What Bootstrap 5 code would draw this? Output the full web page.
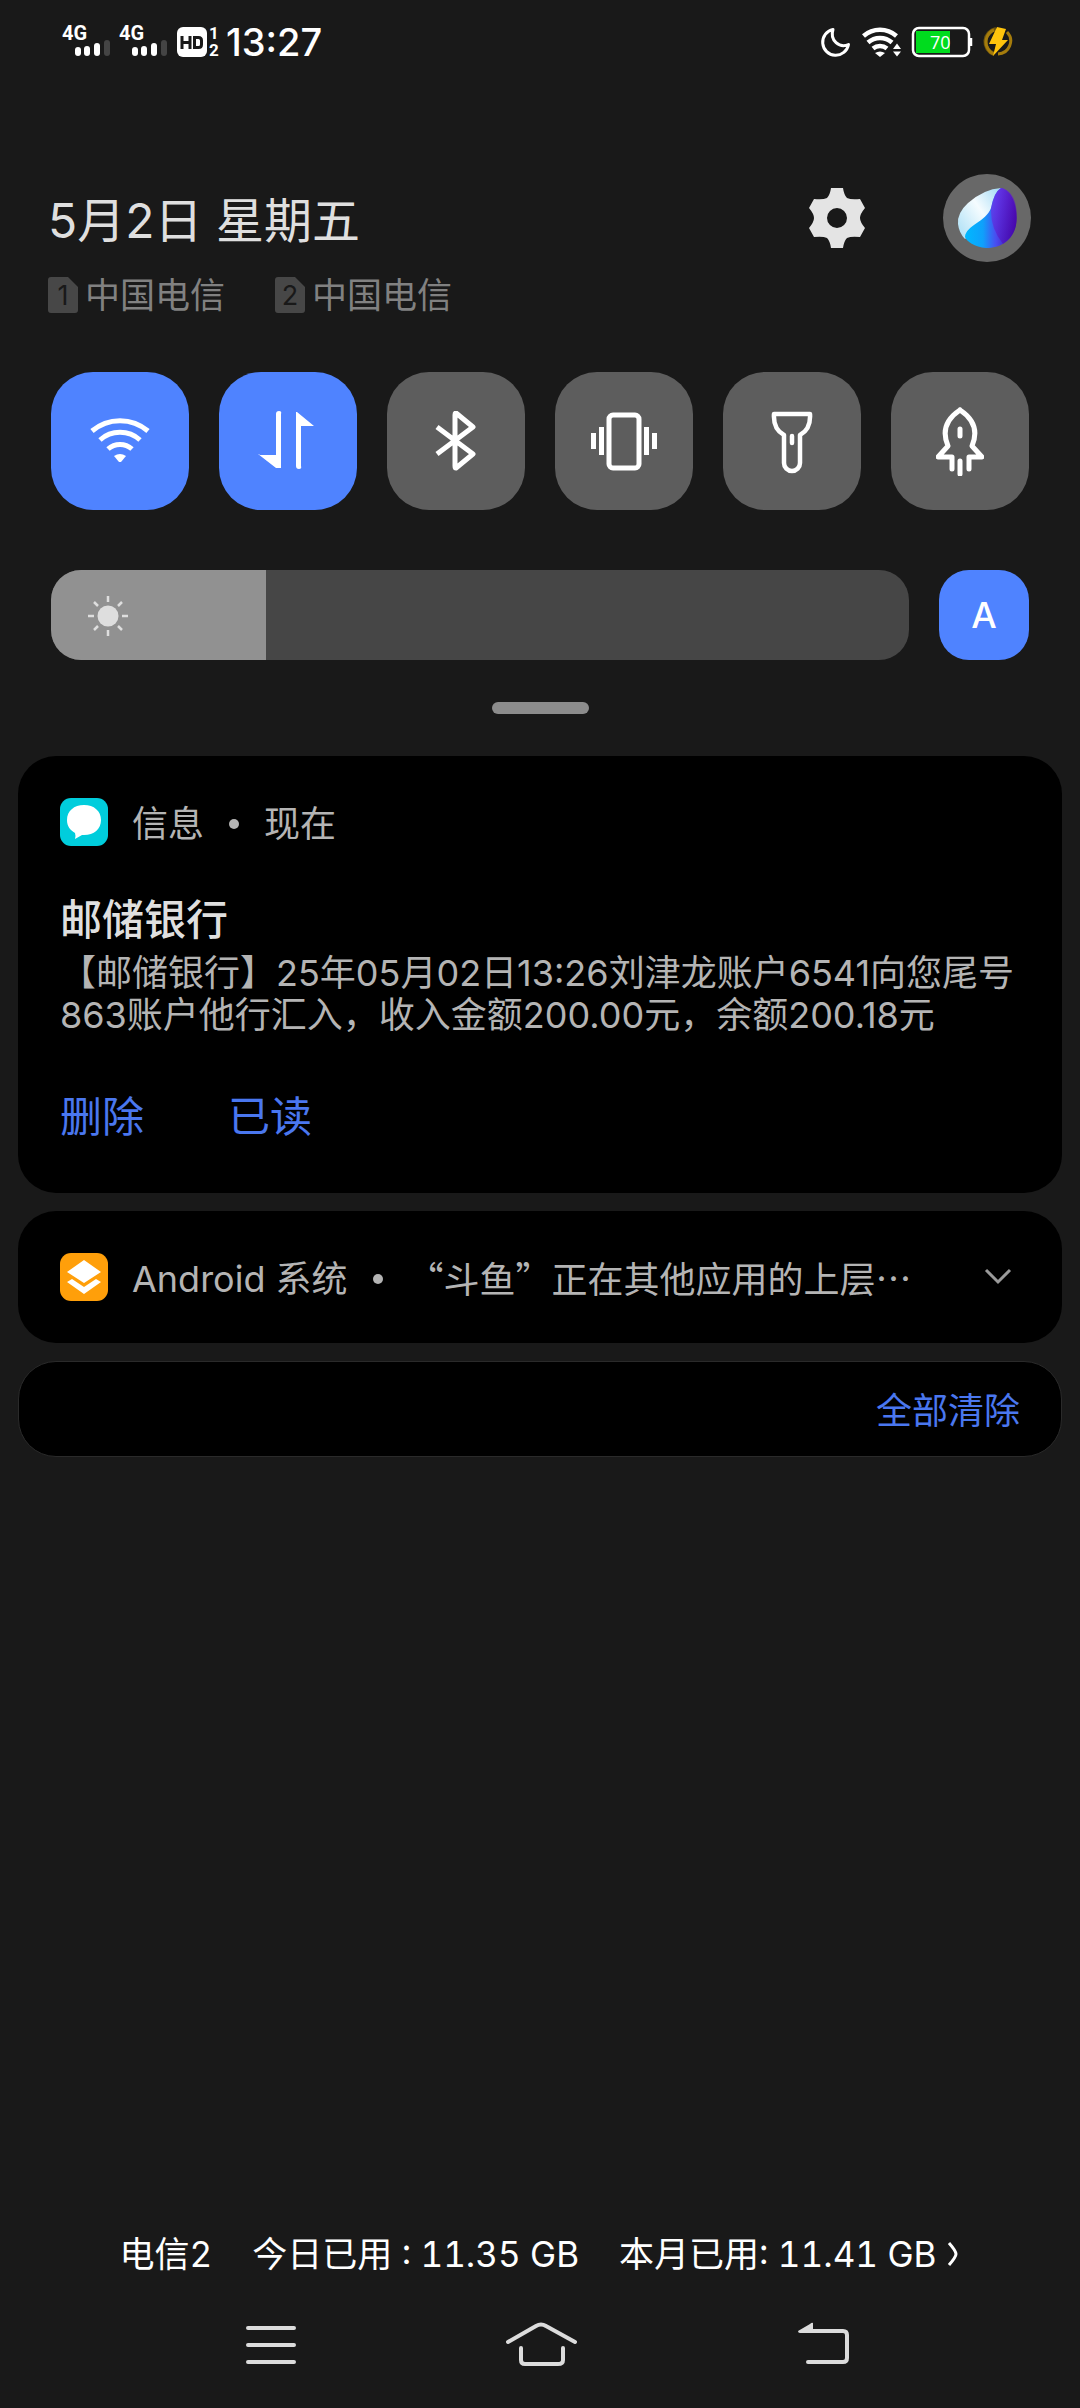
<!DOCTYPE html>
<html lang="zh-CN">
<head>
<meta charset="utf-8">
<meta name="viewport" content="width=device-width, initial-scale=1">
<title>通知中心</title>
<link href="https://cdn.jsdelivr.net/npm/bootstrap@5.3.0/dist/css/bootstrap.min.css" rel="stylesheet">
<style>
body{background:#191919;color:#dfdfdf;font-family:Inter,"Noto Sans CJK SC",sans-serif;font-size:36px;line-height:42px}
svg{display:block;flex:none}
button{border:0;background:none;color:inherit;padding:0;font:inherit}
.shade{min-height:100vh}
.statusbar{height:84px;padding:0 66px 0 60px;color:#fff}
.clock{font-size:38px;font-weight:500}
.datehead{padding:90px 49px 0 48px}
.headtext{padding-top:18px}
.headbtns{gap:78px}
.today{font-size:48px;line-height:58px}
.carriers{color:#818181;gap:50px;font-size:35px}
.sim{gap:7px}
.avatar{width:88px;height:88px;background:#686868}
.tiles{padding:56px 51px 0;gap:30px}
.tile{flex:1;height:138px;border-radius:42px;background:#5d5d5d;color:#fff}
.on{background:#4f83ff;color:#fff}
.bright{padding:60px 51px 0;gap:30px}
.slide{height:90px;border-radius:30px;overflow:hidden}
.slide input{-webkit-appearance:none;appearance:none;width:100%;height:90px;margin:0;display:block;background:#464646}
.slide input::-webkit-slider-thumb{-webkit-appearance:none;width:1px;height:90px;background:#919191;box-shadow:-500px 0 0 499px #919191}
.sun{left:36px;top:25px;pointer-events:none}
.auto{width:90px;height:90px;border-radius:30px;font-weight:500}
.grip{width:97px;height:12px;margin:42px auto;background:#8c8c8c}
.notices{padding:0 18px;gap:18px}
.note{background:#000;border-radius:38px;padding:42px;color:#b4b4b4}
.appline{height:48px}
.appname{padding-top:3px}
.appicon{margin-right:24px}
.bullet{width:10px;height:10px;background:#b4b4b4;margin:3px 25px 0}
.quoted{font-family:"Noto Sans CJK SC",sans-serif}
.sender{font-size:42px;line-height:50px;font-weight:500;color:#dfdfdf;margin:49px 0 7px}
.acts{gap:84px;font-size:42px;line-height:50px;margin:56px 0 9px;color:#4a77ef}
.clearall{border:1px solid #2a2a2a;padding:28px 41px 24px;color:#4a77ef}
.usage{color:#fff;gap:40px;font-size:35px;text-decoration:none;margin-bottom:42px;font-variant-numeric:tabular-nums}
.usage:hover{color:#fff}
.navkeys{color:#dcdcdc;padding:0 228px 35px 234px}
</style>
<script src="https://cdn.jsdelivr.net/npm/bootstrap@5.3.0/dist/js/bootstrap.bundle.min.js"></script>
</head>
<body>
<div class="shade d-flex flex-column">
<header class="statusbar d-flex align-items-center justify-content-between">
  <div class="d-flex align-items-center">
    <svg width="162" height="52" viewBox="60 16 162 52" fill="#fff" font-family="Roboto, sans-serif" font-weight="700">
      <text x="62" y="40" font-size="20">4G</text><text x="119" y="40" font-size="20">4G</text>
      <g id="bars"><rect x="75" y="47" width="6" height="9" rx="3"/><rect x="84" y="46" width="6" height="10" rx="3"/><rect x="94" y="43" width="6" height="13" rx="3"/><rect x="104" y="40" width="6" height="16" rx="3" fill="#444"/></g>
      <use href="#bars" x="57"/>
      <rect x="177" y="27" width="30" height="30" rx="6"/>
      <path d="M182 36v13M190 36v13M182 42.500h8M194.500 37.500h4q3 0 3 3v4q0 3-3 3h-4z" fill="none" stroke="#191919" stroke-width="3"/>
      <text x="209" y="39" font-size="17">1</text><text x="209" y="56" font-size="17">2</text>
    </svg>
    <span class="clock ms-1">13:27</span>
  </div>
  <svg width="194" height="34" viewBox="820 25 194 34" fill="none" stroke="#fff">
    <path d="M833 29.500a13 13 0 1 0 15.500 15c-9 4-19-4-15.500-15z" stroke-width="3" stroke-linejoin="round"/>
    <path d="M863.500 36a25 25 0 0 1 33 0M868 42.500a18 18 0 0 1 24 0M873 48.500a11 11 0 0 1 14 0" stroke-width="4.500"/>
    <path d="M875 53q5-3 10 0l-5 4zM893 49h8l-4-5.500zM893 51.500h8l-4 5z" fill="#fff" stroke="none"/>
    <rect x="913" y="28" width="56" height="28" rx="6" stroke-width="2.500"/><path d="M916 31h34v22h-34z" fill="#00dc1e" stroke="none"/><path d="M971 38v8" stroke-width="2.500"/>
    <text x="930" y="49" font-size="18" fill="#fff" stroke="none" font-family="Open Sans, sans-serif">70</text>
    <path d="M994 54a13 13 0 0 1 2-25" stroke="#6b5410" stroke-width="4"/><path d="M994 30a13 13 0 0 0-7 17q3 6 7 7M1007 32a13 13 0 0 1-9 22" stroke="#a57c0c" stroke-width="3"/>
    <path d="M997 27l9 2-4 11h6l-15 16 3-12h-7z" fill="#ffc40c" stroke="none"/>
  </svg>
</header>

<section class="datehead d-flex justify-content-between align-items-start">
  <div class="headtext">
    <div class="today">5月2日 星期五</div>
    <div class="carriers d-flex mt-4">
      <span class="sim d-flex align-items-center"><svg width="30" height="36" viewBox="0 0 30 36"><path d="M3 0h17l10 10v23q0 3-3 3H3q-3 0-3-3V3q0-3 3-3z" fill="#474747"/><text x="15" y="28" font-size="27" text-anchor="middle" fill="#191919">1</text></svg>中国电信</span>
      <span class="sim d-flex align-items-center"><svg width="30" height="36" viewBox="0 0 30 36"><path d="M3 0h17l10 10v23q0 3-3 3H3q-3 0-3-3V3q0-3 3-3z" fill="#474747"/><text x="15" y="28" font-size="27" text-anchor="middle" fill="#191919">2</text></svg>中国电信</span>
    </div>
  </div>
  <div class="headbtns d-flex align-items-center">
    <button type="button" aria-label="设置"><svg width="56" height="60" viewBox="0 0 56 60"><path fill-rule="evenodd" fill="#e4e4e4" d="M22 0h12q1 7 4 10q4 2 13 1l5 9q-5 6-5 10t5 10l-5 9q-9-1-13 1q-3 3-4 10H22q-1-7-4-10q-4-2-13-1l-5-9q5-6 5-10t-5-10l5-9q9 1 13-1q3-3 4-10zM28 20a10 10 0 1 0 0 20a10 10 0 1 0 0-20z"/></svg></button>
    <button type="button" class="avatar rounded-circle d-flex align-items-center justify-content-center" aria-label="Jovi"><svg width="60" height="62" viewBox="0 0 60 62">
      <defs><linearGradient id="wh" x1="0" y1=".8" x2="1" y2="0"><stop stop-color="#b5e3f7"/><stop offset=".5" stop-color="#f5fcff"/><stop offset="1" stop-color="#9fd9f5"/></linearGradient><linearGradient id="bl"><stop stop-color="#00b9ff"/><stop offset=".35" stop-color="#0fa0fb"/><stop offset=".6" stop-color="#4a4cf0"/><stop offset="1" stop-color="#3e00a0"/></linearGradient><linearGradient id="pu" x1="0" y1="0" x2="1" y2="1"><stop stop-color="#7a35f5"/><stop offset="1" stop-color="#4200a2"/></linearGradient></defs>
      <path d="M44 1Q27 2 11 16Q0 26 1 37Q2 46 8 52L33 34z" fill="url(#wh)"/><path d="M44 1C58 4 61 26 59 38C56 54 43 61 29 61C18 60 9 54 8 50C9 38 29 35 34 21Q37 5 44 1z" fill="url(#bl)"/><path d="M44 1C60 4 61 26 59 38Q56 50 46 57Q33 41 34 21Q38 4 44 1z" fill="url(#pu)" opacity=".6"/></svg></button>
  </div>
</section>

<section class="tiles d-flex" aria-label="快捷开关">
  <button type="button" class="tile on d-flex align-items-center justify-content-center" aria-label="WLAN"><svg width="60" height="60" viewBox="0 0 60 60" fill="none" stroke="currentColor" stroke-width="5"><path d="M2 20a43 43 0 0 1 56 0M10 29a30 30 0 0 1 40 0M18 38a18 18 0 0 1 24 0"/><path d="M24 45q6-4 12 0l-5 6h-2z" fill="currentColor" stroke="none"/></svg></button>
  <button type="button" class="tile on d-flex align-items-center justify-content-center" aria-label="移动数据"><svg width="60" height="60" viewBox="0 0 60 60" fill="currentColor"><path d="M18 58V45H2q-1-1-2-1l18 14V4q0-3 3-3t2 3v54zM38 2v54q0 3 3 3t2-3V16h13L39 2z" transform="translate(0 -1)"/></svg></button>
  <button type="button" class="tile d-flex align-items-center justify-content-center" aria-label="蓝牙"><svg width="60" height="60" viewBox="0 0 60 60" fill="none" stroke="currentColor" stroke-width="5" stroke-linejoin="round"><path d="M11 16l36 27-17 14q-1 0-1-2V4q0-2 1-2l17 14-36 27"/></svg></button>
  <button type="button" class="tile d-flex align-items-center justify-content-center" aria-label="振动"><svg width="66" height="60" viewBox="0 0 66 60" fill="none" stroke="currentColor" stroke-width="5"><rect x="18" y="4" width="30" height="53" rx="4"/><path d="M2.500 22v16M10.500 16v28M55.500 16v28M63.500 22v16"/></svg></button>
  <button type="button" class="tile d-flex align-items-center justify-content-center" aria-label="手电筒"><svg width="42" height="66" viewBox="0 0 42 66" fill="none" stroke="currentColor" stroke-width="4.500" stroke-linejoin="round" stroke-linecap="round"><path d="M3 6h36q1 15-10 21v28a8 8 0 0 1-16 0V27Q2 21 3 6zM21 28v7"/></svg></button>
  <button type="button" class="tile d-flex align-items-center justify-content-center" aria-label="加速"><svg width="48" height="70" viewBox="0 0 48 70" fill="none" stroke="currentColor" stroke-width="5" stroke-linejoin="round" stroke-linecap="round"><path d="M24 4c-15 10-18 22-12 36L2 51h14v12M24 4c15 10 18 22 12 36l10 11H33v12M24 23v7M24 55v13"/></svg></button>
</section>

<section class="bright d-flex">
  <div class="slide flex-grow-1 position-relative"><input type="range" min="0" max="100" value="25" aria-label="亮度">
    <svg class="sun position-absolute" width="42" height="42" viewBox="0 0 42 42"><circle cx="21" cy="21" r="10.500" fill="#dedede"/><path d="M21 1v6M21 35v6M1 21h6M35 21h6M7 7l4 4M31 31l4 4M35 7l-4 4M11 31l-4 4" stroke="#dedede" stroke-width="2.500"/></svg></div>
  <button type="button" class="auto on">A</button>
</section>
<div class="grip rounded-pill"></div>

<main class="notices d-flex flex-column">
  <article class="note">
    <div class="appline d-flex align-items-center"><svg class="appicon" width="48" height="48" viewBox="0 0 48 48"><rect width="48" height="48" rx="11" fill="#00cddc"/><path d="M24 7c10 0 17 6 17 15s-7 15-17 15h-2l-7 4q1-3 0-6c-5-3-8-7-8-13C7 13 14 7 24 7z" fill="#fff"/></svg><span class="appname">信息</span><span class="bullet rounded-circle"></span><span class="appname">现在</span></div>
    <h2 class="sender">邮储银行</h2>
    <p class="mb-0">【邮储银行】25年05月02日13:26刘津龙账户6541向您尾号863账户他行汇入，收入金额200.00元，余额200.18元</p>
    <div class="acts d-flex"><button type="button">删除</button><button type="button">已读</button></div>
  </article>
  <article class="note">
    <div class="appline d-flex align-items-center"><svg class="appicon" width="48" height="48" viewBox="0 0 48 48"><rect width="48" height="48" rx="11" fill="#ff9f0a"/><path d="M24 7l17 12-17 11L7 19zM12 26l12 8 12-8 5 3-17 12L7 29z" fill="#fff"/></svg><span class="appname text-nowrap">Android 系统</span><span class="bullet rounded-circle flex-shrink-0"></span><span class="quoted text-nowrap">“斗鱼”正在其他应用的上层…</span>
    <button type="button" class="ms-auto me-2" aria-label="展开"><svg width="28" height="18" viewBox="0 0 28 18" fill="none" stroke="#9a9a9a" stroke-width="3"><path d="M2 2l12 12L26 2"/></svg></button></div>
  </article>
  <div class="note clearall d-flex justify-content-end"><button type="button">全部清除</button></div>
</main>

<footer class="mt-auto">
  <a href="#" class="usage d-flex justify-content-center"><span>电信2</span><span>今日已用 : 11.35 GB</span><span class="d-flex align-items-center">本月已用: 11.41 GB<svg class="ms-2" width="16" height="24" viewBox="0 0 16 24" fill="none" stroke="#fff" stroke-width="3"><path d="M5 1q7 8 7 11t-7 11"/></svg></span></a>
  <nav class="navkeys d-flex justify-content-between align-items-center">
    <button type="button" aria-label="最近任务"><svg width="74" height="56" viewBox="234 2317 74 56" stroke="currentColor" stroke-width="4" stroke-linecap="round"><path d="M248 2328h46M248 2345h46M248 2362h46"/></svg></button>
    <button type="button" aria-label="主屏幕"><svg width="74" height="56" viewBox="504 2317 74 56" fill="none" stroke="currentColor" stroke-width="4" stroke-linecap="round"><path d="M508 2342l28-16q5-3 10 0l29 16M521 2348v12q0 4 4 4h33q5 0 5-4v-12"/></svg></button>
    <button type="button" aria-label="返回"><svg width="78" height="56" viewBox="774 2317 78 56" fill="none" stroke="currentColor" stroke-width="4" stroke-linecap="round"><path d="M808 2331h35q4 0 4 4v23q0 4-4 4h-35"/><path d="M798 2331q0 2 2 2h13v-10q-1-1-3 1z" fill="currentColor" stroke="none"/></svg></button>
  </nav>
</footer>
</div>
</body>
</html>
